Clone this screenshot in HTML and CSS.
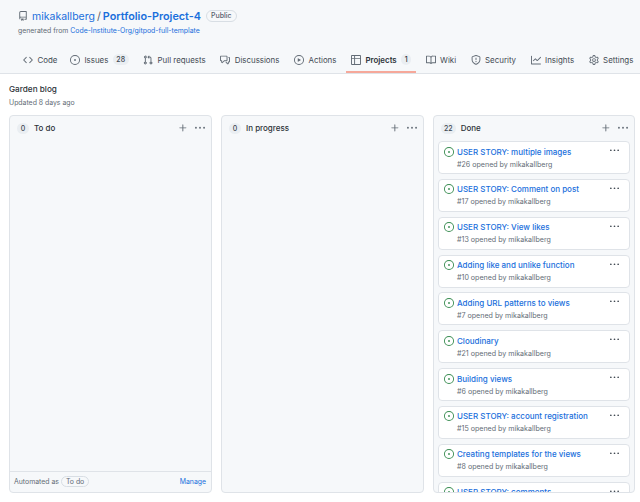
FILE: index.html
```html
<!DOCTYPE html>
<html lang="en">
<head>
<meta charset="utf-8">
<title>Garden blog</title>
<link rel="stylesheet" href="styles.css">
</head>
<body>
<svg width="0" height="0" class="defs">
  <symbol id="i-issue" viewBox="0 0 16 16"><path d="M8 9.5a1.5 1.5 0 1 0 0-3 1.5 1.5 0 0 0 0 3Z"/><path d="M8 0a8 8 0 1 1 0 16A8 8 0 0 1 8 0ZM1.5 8a6.5 6.5 0 1 0 13 0 6.5 6.5 0 0 0-13 0Z"/></symbol>
  <symbol id="i-kebab" viewBox="0 0 16 16"><path d="M8 9a1.5 1.5 0 1 0 0-3 1.5 1.5 0 0 0 0 3ZM1.5 9a1.5 1.5 0 1 0 0-3 1.5 1.5 0 0 0 0 3Zm13 0a1.5 1.5 0 1 0 0-3 1.5 1.5 0 0 0 0 3Z"/></symbol>
  <symbol id="i-plus" viewBox="0 0 16 16"><path d="M7.75 2a.75.75 0 0 1 .75.75V7h4.25a.75.75 0 0 1 0 1.5H8.5v4.25a.75.75 0 0 1-1.5 0V8.5H2.75a.75.75 0 0 1 0-1.5H7V2.75A.75.75 0 0 1 7.75 2Z"/></symbol>
</svg>
<header class="repo-head">
  <div class="repo-title">
    <svg class="icon repo-icon" viewBox="0 0 16 16"><path d="M2 2.5A2.5 2.5 0 0 1 4.5 0h8.75a.75.75 0 0 1 .75.75v12.5a.75.75 0 0 1-.75.75h-2.5a.75.75 0 0 1 0-1.5h1.75v-2h-8a1 1 0 0 0-.714 1.7.75.75 0 1 1-1.072 1.05A2.495 2.495 0 0 1 2 11.5Zm10.5-1h-8a1 1 0 0 0-1 1v6.708A2.486 2.486 0 0 1 4.5 9h8ZM5 12.25a.25.25 0 0 1 .25-.25h3.5a.25.25 0 0 1 .25.25v3.25a.25.25 0 0 1-.4.2l-1.45-1.087a.249.249 0 0 0-.3 0L5.4 15.7a.25.25 0 0 1-.4-.2Z"/></svg>
    <a class="owner">mikakallberg</a><span class="slash">/</span><a class="repo-name">Portfolio-Project-4</a>
    <span class="public">Public</span>
  </div>
  <div class="forked">generated from <a>Code-Institute-Org/gitpod-full-template</a></div>
  <nav class="tabs">
    <a class="tab tab-code"><svg class="icon" viewBox="0 0 16 16"><path d="m11.28 3.22 4.25 4.25a.75.75 0 0 1 0 1.06l-4.25 4.25a.749.749 0 0 1-1.275-.326.749.749 0 0 1 .215-.734L13.94 8l-3.72-3.72a.749.749 0 0 1 .326-1.275.749.749 0 0 1 .734.215Zm-6.56 0a.751.751 0 0 1 1.042.018.751.751 0 0 1 .018 1.042L2.06 8l3.72 3.72a.749.749 0 0 1-.326 1.275.749.749 0 0 1-.734-.215L.47 8.53a.75.75 0 0 1 0-1.06Z"/></svg>Code</a>
    <a class="tab"><svg class="icon"><use href="#i-issue"/></svg>Issues<span class="count">28</span></a>
    <a class="tab"><svg class="icon" viewBox="0 0 16 16"><path d="M1.5 3.25a2.25 2.25 0 1 1 3 2.122v5.256a2.251 2.251 0 1 1-1.5 0V5.372A2.25 2.25 0 0 1 1.5 3.25Zm5.677-.177L9.573.677A.25.25 0 0 1 10 .854V2.5h1A2.5 2.5 0 0 1 13.5 5v5.628a2.251 2.251 0 1 1-1.5 0V5a1 1 0 0 0-1-1h-1v1.646a.25.25 0 0 1-.427.177L7.177 3.427a.25.25 0 0 1 0-.354ZM3.75 2.5a.75.75 0 1 0 0 1.5.75.75 0 0 0 0-1.5Zm0 9.5a.75.75 0 1 0 0 1.5.75.75 0 0 0 0-1.5Zm8.25.75a.75.75 0 1 0 1.5 0 .75.75 0 0 0-1.5 0Z"/></svg>Pull requests</a>
    <a class="tab"><svg class="icon" viewBox="0 0 16 16"><path d="M1.75 1h8.5c.966 0 1.75.784 1.75 1.75v5.5A1.75 1.75 0 0 1 10.25 10H7.061l-2.574 2.573A1.458 1.458 0 0 1 2 11.543V10h-.25A1.75 1.75 0 0 1 0 8.25v-5.5C0 1.784.784 1 1.75 1ZM1.5 2.75v5.5c0 .138.112.25.25.25h1a.75.75 0 0 1 .75.75v2.19l2.72-2.72a.749.749 0 0 1 .53-.22h3.5a.25.25 0 0 0 .25-.25v-5.5a.25.25 0 0 0-.25-.25h-8.5a.25.25 0 0 0-.25.25Zm13 2a.25.25 0 0 0-.25-.25h-.5a.75.75 0 0 1 0-1.5h.5c.966 0 1.75.784 1.75 1.75v5.5A1.75 1.75 0 0 1 14.25 12H14v1.543a1.458 1.458 0 0 1-2.487 1.03L9.22 12.28a.749.749 0 0 1 .326-1.275.749.749 0 0 1 .734.215l2.22 2.22v-2.19a.75.75 0 0 1 .75-.75h1a.25.25 0 0 0 .25-.25Z"/></svg>Discussions</a>
    <a class="tab"><svg class="icon" viewBox="0 0 16 16"><path d="M8 0a8 8 0 1 1 0 16A8 8 0 0 1 8 0ZM1.5 8a6.5 6.5 0 1 0 13 0 6.5 6.5 0 0 0-13 0Zm4.879-2.773 4.264 2.559a.25.25 0 0 1 0 .428l-4.264 2.559A.25.25 0 0 1 6 10.559V5.442a.25.25 0 0 1 .379-.215Z"/></svg>Actions</a>
    <a class="tab active"><svg class="icon" viewBox="0 0 16 16"><path d="M0 1.75C0 .784.784 0 1.75 0h12.5C15.216 0 16 .784 16 1.75v12.5A1.75 1.75 0 0 1 14.25 16H1.75A1.75 1.75 0 0 1 0 14.25ZM6.5 6.5v8h7.75a.25.25 0 0 0 .25-.25V6.5Zm8-1.5V1.75a.25.25 0 0 0-.25-.25H6.5V5Zm-13 1.5v7.75c0 .138.112.25.25.25H5v-8ZM5 5V1.5H1.75a.25.25 0 0 0-.25.25V5Z"/></svg>Projects<span class="count">1</span></a>
    <a class="tab"><svg class="icon" viewBox="0 0 16 16"><path d="M0 1.75A.75.75 0 0 1 .75 1h4.253c1.227 0 2.317.59 3 1.501A3.743 3.743 0 0 1 11.006 1h4.245a.75.75 0 0 1 .75.75v10.5a.75.75 0 0 1-.75.75h-4.507a2.25 2.25 0 0 0-1.591.659l-.622.621a.75.75 0 0 1-1.06 0l-.622-.621A2.25 2.25 0 0 0 5.258 13H.75a.75.75 0 0 1-.75-.75Zm7.251 10.324.004-5.073-.002-2.253A2.25 2.25 0 0 0 5.003 2.5H1.5v9h3.757a3.75 3.75 0 0 1 1.994.574ZM8.755 4.75l-.004 7.322a3.752 3.752 0 0 1 1.992-.572H14.5v-9h-3.495a2.25 2.25 0 0 0-2.25 2.25Z"/></svg>Wiki</a>
    <a class="tab"><svg class="icon" viewBox="0 0 16 16"><path d="M7.467.133a1.748 1.748 0 0 1 1.066 0l5.25 1.68A1.75 1.75 0 0 1 15 3.48V7c0 1.566-.32 3.182-1.303 4.682-.983 1.498-2.585 2.813-5.032 3.855a1.697 1.697 0 0 1-1.33 0c-2.447-1.042-4.049-2.357-5.032-3.855C1.32 10.182 1 8.566 1 7V3.48a1.75 1.75 0 0 1 1.217-1.667Zm.61 1.429a.25.25 0 0 0-.153 0l-5.25 1.68a.25.25 0 0 0-.174.238V7c0 1.358.275 2.666 1.057 3.86.784 1.194 2.121 2.34 4.366 3.297a.196.196 0 0 0 .154 0c2.245-.956 3.582-2.104 4.366-3.298C13.225 9.666 13.5 8.36 13.5 7V3.48a.251.251 0 0 0-.174-.237l-5.25-1.68ZM8.75 4.75v3a.75.75 0 0 1-1.5 0v-3a.75.75 0 0 1 1.5 0ZM9 10.5a1 1 0 1 1-2 0 1 1 0 0 1 2 0Z"/></svg>Security</a>
    <a class="tab"><svg class="icon" viewBox="0 0 16 16"><path d="M1.5 1.75V13.5h13.75a.75.75 0 0 1 0 1.5H.75a.75.75 0 0 1-.75-.75V1.75a.75.75 0 0 1 1.5 0Zm14.28 2.53-5.25 5.25a.75.75 0 0 1-1.06 0L7 7.06 4.28 9.78a.751.751 0 0 1-1.042-.018.751.751 0 0 1-.018-1.042l3.25-3.25a.75.75 0 0 1 1.06 0L10 7.94l4.72-4.72a.751.751 0 0 1 1.042.018.751.751 0 0 1 .018 1.042Z"/></svg>Insights</a>
    <a class="tab"><svg class="icon" viewBox="0 0 16 16"><path d="M8 0a8.2 8.2 0 0 1 .701.031C9.444.095 9.99.645 10.16 1.29l.288 1.107c.018.066.079.158.212.224.231.114.454.243.668.386.123.082.233.09.299.071l1.103-.303c.644-.176 1.392.021 1.82.63.27.385.506.792.704 1.218.315.675.111 1.422-.364 1.891l-.814.806c-.049.048-.098.147-.088.294.016.257.016.515 0 .772-.01.147.038.246.088.294l.814.806c.475.469.679 1.216.364 1.891a7.977 7.977 0 0 1-.704 1.217c-.428.61-1.176.807-1.82.63l-1.102-.302c-.067-.019-.177-.011-.3.071a5.909 5.909 0 0 1-.668.386c-.133.066-.194.158-.211.224l-.29 1.106c-.168.646-.715 1.196-1.458 1.26a8.006 8.006 0 0 1-1.402 0c-.743-.064-1.289-.614-1.458-1.26l-.289-1.106c-.018-.066-.079-.158-.212-.224a5.738 5.738 0 0 1-.668-.386c-.123-.082-.233-.09-.299-.071l-1.103.303c-.644.176-1.392-.021-1.82-.63a8.12 8.12 0 0 1-.704-1.218c-.315-.675-.111-1.422.363-1.891l.815-.806c.05-.048.098-.147.088-.294a6.214 6.214 0 0 1 0-.772c.01-.147-.038-.246-.088-.294l-.815-.806C.635 6.045.431 5.298.746 4.623a7.92 7.92 0 0 1 .704-1.217c.428-.61 1.176-.807 1.82-.63l1.102.302c.067.019.177.011.3-.071.214-.143.437-.272.668-.386.133-.066.194-.158.211-.224l.29-1.106C6.009.645 6.556.095 7.299.03 7.53.01 7.764 0 8 0Zm-.571 1.525c-.036.003-.108.036-.137.146l-.289 1.105c-.147.561-.549.967-.998 1.189-.173.086-.34.183-.5.29-.417.278-.97.423-1.529.27l-1.103-.303c-.109-.03-.175.016-.195.045-.22.312-.412.644-.573.99-.014.031-.021.11.059.19l.815.806c.411.406.562.957.53 1.456a4.709 4.709 0 0 0 0 .582c.032.499-.119 1.05-.53 1.456l-.815.806c-.081.08-.073.159-.059.19.162.346.353.677.573.989.02.03.085.076.195.046l1.102-.303c.56-.153 1.113-.008 1.53.27.161.107.328.204.501.29.447.222.85.629.997 1.189l.289 1.105c.029.109.101.143.137.146a6.6 6.6 0 0 0 1.142 0c.036-.003.108-.036.137-.146l.289-1.105c.147-.561.549-.967.998-1.189.173-.086.34-.183.5-.29.417-.278.97-.423 1.529-.27l1.103.303c.109.029.175-.016.195-.045.22-.313.411-.644.573-.99.014-.031.021-.11-.059-.19l-.815-.806c-.411-.406-.562-.957-.53-1.456a4.709 4.709 0 0 0 0-.582c-.032-.499.119-1.05.53-1.456l.815-.806c.081-.08.073-.159.059-.19a6.464 6.464 0 0 0-.573-.989c-.02-.03-.085-.076-.195-.046l-1.102.303c-.56.153-1.113.008-1.53-.27a4.44 4.44 0 0 0-.501-.29c-.447-.222-.85-.629-.997-1.189l-.289-1.105c-.029-.11-.101-.143-.137-.146a6.6 6.6 0 0 0-1.142 0ZM11 8a3 3 0 1 1-6 0 3 3 0 0 1 6 0ZM9.5 8a1.5 1.5 0 1 0-3.001.001A1.5 1.5 0 0 0 9.5 8Z"/></svg>Settings</a>
  </nav>
</header>
<main class="project">
  <h1 class="project-name">Garden blog</h1>
  <p class="updated">Updated 8 days ago</p>
  <div class="board">
    <section class="column">
      <div class="col-head"><span class="col-count">0</span><span class="col-name">To do</span><svg class="icon act"><use href="#i-plus"/></svg><svg class="icon act"><use href="#i-kebab"/></svg></div>
      <div class="col-body"></div>
      <div class="col-foot"><span>Automated as</span><span class="pill">To do</span><a class="manage">Manage</a></div>
    </section>
    <section class="column">
      <div class="col-head"><span class="col-count">0</span><span class="col-name">In progress</span><svg class="icon act"><use href="#i-plus"/></svg><svg class="icon act"><use href="#i-kebab"/></svg></div>
      <div class="col-body"></div>
    </section>
    <section class="column">
      <div class="col-head"><span class="col-count">22</span><span class="col-name">Done</span><svg class="icon act"><use href="#i-plus"/></svg><svg class="icon act"><use href="#i-kebab"/></svg></div>
      <div class="cards">
        <article class="card"><svg class="icon open"><use href="#i-issue"/></svg><div class="card-text"><a class="card-title">USER STORY: multiple images</a><p class="card-meta">#26 opened by mikakallberg</p></div><svg class="icon card-menu"><use href="#i-kebab"/></svg></article>
        <article class="card"><svg class="icon open"><use href="#i-issue"/></svg><div class="card-text"><a class="card-title">USER STORY: Comment on post</a><p class="card-meta">#17 opened by mikakallberg</p></div><svg class="icon card-menu"><use href="#i-kebab"/></svg></article>
        <article class="card"><svg class="icon open"><use href="#i-issue"/></svg><div class="card-text"><a class="card-title">USER STORY: View likes</a><p class="card-meta">#13 opened by mikakallberg</p></div><svg class="icon card-menu"><use href="#i-kebab"/></svg></article>
        <article class="card"><svg class="icon open"><use href="#i-issue"/></svg><div class="card-text"><a class="card-title">Adding like and unlike function</a><p class="card-meta">#10 opened by mikakallberg</p></div><svg class="icon card-menu"><use href="#i-kebab"/></svg></article>
        <article class="card"><svg class="icon open"><use href="#i-issue"/></svg><div class="card-text"><a class="card-title">Adding URL patterns to views</a><p class="card-meta">#7 opened by mikakallberg</p></div><svg class="icon card-menu"><use href="#i-kebab"/></svg></article>
        <article class="card"><svg class="icon open"><use href="#i-issue"/></svg><div class="card-text"><a class="card-title">Cloudinary</a><p class="card-meta">#21 opened by mikakallberg</p></div><svg class="icon card-menu"><use href="#i-kebab"/></svg></article>
        <article class="card"><svg class="icon open"><use href="#i-issue"/></svg><div class="card-text"><a class="card-title">Building views</a><p class="card-meta">#6 opened by mikakallberg</p></div><svg class="icon card-menu"><use href="#i-kebab"/></svg></article>
        <article class="card"><svg class="icon open"><use href="#i-issue"/></svg><div class="card-text"><a class="card-title">USER STORY: account registration</a><p class="card-meta">#15 opened by mikakallberg</p></div><svg class="icon card-menu"><use href="#i-kebab"/></svg></article>
        <article class="card"><svg class="icon open"><use href="#i-issue"/></svg><div class="card-text"><a class="card-title">Creating templates for the views</a><p class="card-meta">#8 opened by mikakallberg</p></div><svg class="icon card-menu"><use href="#i-kebab"/></svg></article>
        <article class="card"><svg class="icon open"><use href="#i-issue"/></svg><div class="card-text"><a class="card-title">USER STORY: comments</a></div><svg class="icon card-menu"><use href="#i-kebab"/></svg></article>
      </div>
    </section>
  </div>
</main>
</body>
</html>
```
FILE: styles.css
```css
* { box-sizing: border-box; }
html, body { margin: 0; height: 100%; overflow: hidden; }
body { font-family: Inter, "Liberation Sans", sans-serif; color: #2c3238; background: #fff; font-size: 8px; display: flex; flex-direction: column; }
a { color: #1a6fdc; text-decoration: none; }
p, h1 { margin: 0; }
.defs { position: absolute; }
.icon { width: 10px; height: 10px; fill: #636c76; flex: none; display: block; }
.repo-head { height: 74px; flex: none; background: #f6f8fa; border-bottom: 1px solid #dfe3e8; padding: 9px 0 0 18px; display: flex; flex-direction: column; }
.repo-title { display: flex; align-items: center; height: 14px; font-size: 10.8px; }
.repo-icon { margin-right: 4px; }
.owner { font-size: 10.5px; }
.slash { margin: 0 2px; color: #57606a; }
.repo-name { font-weight: 600; }
.public { margin-left: 5px; border: 1px solid #d8dee4; border-radius: 6px; font-size: 7px; padding: 0 4px; height: 11.5px; line-height: 9.5px; color: #57606a; font-weight: 500; }
.forked { margin-top: 3px; font-size: 6.9px; color: #636c76; line-height: 10px; }
.tabs { display: flex; margin: auto 0 0; height: 24px; }
.tab { display: flex; align-items: center; gap: 4.5px; padding: 0 5px 3px; margin-right: 4.5px; color: #424a53; font-size: 7.9px; height: 24px; white-space: nowrap; }
.tab-code { margin-right: 2.5px; }
.tab.active { font-weight: 600; color: #2c3238; border-bottom: 2px solid #f6a89a; padding-bottom: 1px; }
.count { background: #eaeef2; border-radius: 6px; font-size: 7px; font-weight: 500; padding: 0 3.5px; height: 11px; line-height: 11px; }
.project { flex: 1; min-height: 0; padding: 10px 9px 9.5px; display: flex; flex-direction: column; }
.project-name { font-size: 8.2px; font-weight: 500; line-height: 11px; }
.updated { font-size: 6.9px; color: #636c76; line-height: 11px; margin-top: 2px; }
.board { flex: 1; min-height: 0; margin-top: 7px; display: grid; grid-template-columns: 203px 203px 202px; gap: 9px; }
.column { background: #f6f8fa; border: 1px solid #dfe3e8; border-radius: 4px; display: flex; flex-direction: column; min-height: 0; overflow: hidden; }
.col-head { display: flex; align-items: center; padding: 0 6px 0 7px; height: 24px; flex: none; gap: 5px; }
.col-count { background: #eaeef2; border-radius: 6px; min-width: 12px; padding: 0 3px; height: 11px; line-height: 11px; font-size: 7px; text-align: center; color: #424a53; font-weight: 500; }
.col-name { font-size: 8px; font-weight: 500; flex: 1; }
.col-body { flex: 1; }
.act { margin-left: 2px; }
.col-foot { display: flex; align-items: center; height: 21px; flex: none; border-top: 1px solid #dfe3e8; padding: 0 5px 0 4px; font-size: 6.9px; color: #636c76; gap: 2px; }
.pill { border: 1px solid #d8dee4; border-radius: 6px; padding: 0 4px; height: 11px; line-height: 9px; }
.manage { margin-left: auto; }
.cards { flex: 1; min-height: 0; display: flex; flex-direction: column; gap: 4.85px; padding: 1px 4px 0; overflow: hidden; }
.card { flex: none; height: 33px; background: #fff; border: 1px solid #dfe3e8; border-radius: 4px; display: flex; padding: 4.5px 5px 0; gap: 3px; }
.open { fill: #3a8d52; margin-top: 0; }
.card-text { flex: 1; min-width: 0; }
.card-title { display: block; font-weight: 500; font-size: 8px; line-height: 11px; }
.card-meta { font-size: 7.1px; color: #636c76; line-height: 11px; margin-top: 1px; }
.card-menu { width: 9px; height: 9px; fill: #424a53; margin: -0.5px 5px 0 0; }
```
